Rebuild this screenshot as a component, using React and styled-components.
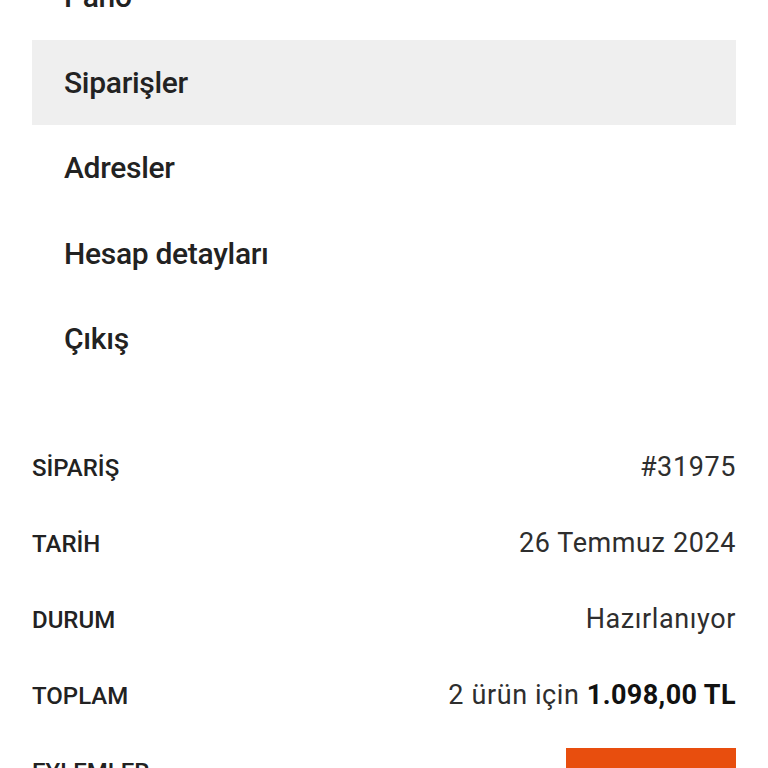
import styled, { createGlobalStyle } from "styled-components";

/* ---------------------------------- STYLE --------------------------------- */

const GlobalStyle = createGlobalStyle`
    html, body {
        margin: 0;
        padding: 0;
        background: #ffffff;
        font-family: Roboto, "Noto Sans", "Liberation Sans", sans-serif;
        color: #222222;
        overflow: hidden;
    }
`;

const Page = styled.div`
    padding: 0 32px;
    margin-top: -46px;
`;

const Menu = styled.nav`
    display: flex;
    flex-direction: column;
`;

const MenuItem = styled.a`
    display: flex;
    align-items: center;
    height: 85.5px;
    padding: 0 32px;
    font-size: 30px;
    font-weight: 500;
    color: #222222;
    text-decoration: none;
    letter-spacing: -0.3px;
    background: ${props => props.active ? "#efefef" : "transparent"};
`;

const Details = styled.div`
    display: flex;
    flex-direction: column;
    margin-top: 47px;
`;

const Row = styled.div`
    display: flex;
    align-items: ${props => props.top ? "flex-start" : "center"};
    justify-content: space-between;
    height: 76px;
`;

const Label = styled.span`
    font-size: 24px;
    font-weight: 500;
    text-transform: uppercase;
    color: #222222;
    margin-top: ${props => props.top ? "25px" : "3px"};
`;

const Value = styled.span`
    font-size: 27px;
    font-weight: 400;
    color: #2e2e2e;
    letter-spacing: 0.6px;

    strong {
        font-weight: 700;
        color: #111111;
        letter-spacing: 0.4px;
    }
`;

const Button = styled.button`
    width: 170px;
    height: 60px;
    margin-top: 15px;
    padding-top: 10px;
    border: none;
    background: #e84e0e;
    color: #ffffff;
    font-family: inherit;
    font-size: 18px;
    font-weight: 600;
    text-transform: uppercase;
`;

/* ----------------------------------- DOM ---------------------------------- */

const menu = ["Pano", "Siparişler", "Adresler", "Hesap detayları", "Çıkış"];

const details = [
    { label: "SİPARİŞ", value: "#31975" },
    { label: "TARİH", value: "26 Temmuz 2024" },
    { label: "DURUM", value: "Hazırlanıyor" },
];

function App() {
    return (
        <>
            <GlobalStyle />
            <Page>
                <Menu>
                    {menu.map((item) => (
                        <MenuItem key={item} href="#" active={item === "Siparişler" ? 1 : 0}>
                            {item}
                        </MenuItem>
                    ))}
                </Menu>
                <Details>
                    {details.map((d) => (
                        <Row key={d.label}>
                            <Label>{d.label}</Label>
                            <Value>{d.value}</Value>
                        </Row>
                    ))}
                    <Row>
                        <Label>TOPLAM</Label>
                        <Value>2 ürün için <strong>1.098,00 TL</strong></Value>
                    </Row>
                    <Row top={1}>
                        <Label top={1}>EYLEMLER</Label>
                        <Button>Görüntüle</Button>
                    </Row>
                </Details>
            </Page>
        </>
    );
}

export default App;
